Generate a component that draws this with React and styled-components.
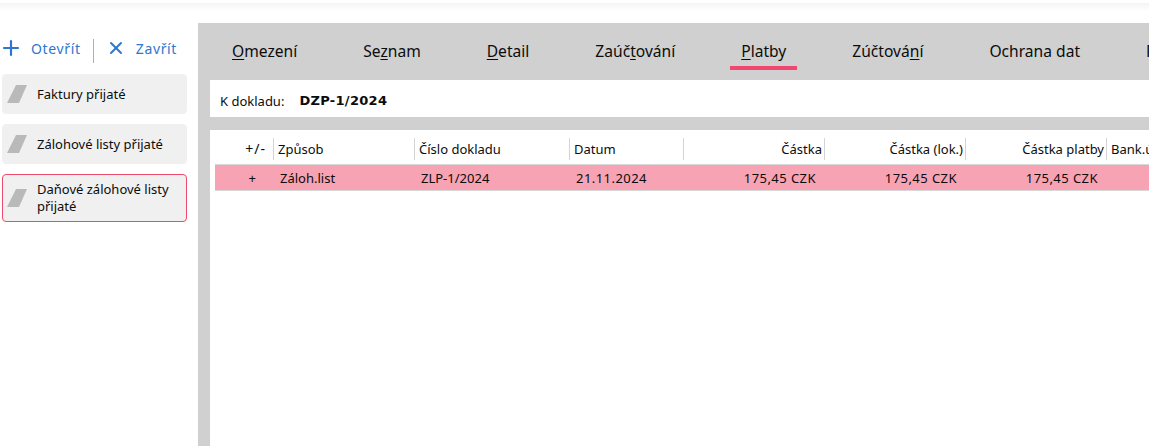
import styled, { createGlobalStyle } from "styled-components";
import { Plus, X } from "lucide-react";

const Global = createGlobalStyle`
  html, body {
    margin: 0;
    height: 100%;
    overflow: hidden;
    background: #fff;
  }
  body {
    font-family: "Noto Sans", "Open Sans", sans-serif;
    color: #0c0c0c;
  }
`;

const Page = styled.div`
  width: 1149px;
  height: 446px;
  overflow: hidden;
  display: flex;
  flex-direction: column;
`;

const TopStrip = styled.div`
  height: 8px;
  margin-top: 3px;
  background: linear-gradient(#f4f4f4, #ffffff);
`;

const Body = styled.div`
  flex: 1;
  display: flex;
  padding-top: 12px;
  min-height: 0;
`;

const Side = styled.aside`
  width: 198px;
  flex: none;
  padding: 0 11px 0 2px;
  box-sizing: border-box;
`;

const Toolbar = styled.div`
  height: 51px;
  display: flex;
  align-items: center;
  padding-top: 5px;
  box-sizing: border-box;
  color: #2f76cf;
  font-size: 14px;
  letter-spacing: 0.65px;
`;

const ToolButton = styled.span`
  display: flex;
  align-items: center;
  gap: ${(p) => p.$gap}px;
  padding-bottom: 6px;
  margin-left: ${(p) => p.$offset || 0}px;
`;

const Divider = styled.span`
  width: 1px;
  height: 24px;
  background: #b0b0b0;
  margin: 0 12px;
`;

const Cards = styled.div`
  display: flex;
  flex-direction: column;
  gap: 10px;
`;

const Card = styled.div`
  display: flex;
  align-items: center;
  gap: 10px;
  min-height: 40px;
  padding: 6px 4px;
  box-sizing: border-box;
  border-radius: 4px;
  background: #f0f0f0;
  border: 1px solid ${(p) => (p.$active ? "#ee4a6d" : "#f0f0f0")};
  font-size: 13px;
  line-height: 17px;
`;

const Mark = styled.span`
  width: 20px;
  height: 18px;
  flex: none;
  background: #b9b9b9;
  clip-path: polygon(45% 0, 100% 0, 60% 100%, 0 100%);
`;

const Panel = styled.main`
  flex: 1;
  min-width: 0;
  background: #d0d0d0;
  display: flex;
  flex-direction: column;
  padding-left: 12px;
`;

const Tabs = styled.nav`
  height: 57px;
  flex: none;
  display: flex;
  gap: 44px;
  padding-left: 11px;
  white-space: nowrap;
`;

const Tab = styled.span`
  height: 30px;
  padding: 13px 11px 0;
  display: flex;
  align-items: center;
  font-size: 15.6px;
  border-bottom: 4px solid ${(p) => (p.$active ? "#f0466f" : "transparent")};

  u {
    text-underline-offset: 2px;
    text-decoration-thickness: 1px;
  }
`;

const DocBar = styled.div`
  height: 37px;
  flex: none;
  box-sizing: border-box;
  padding: 4px 0 0 10px;
  background: #fff;
  display: flex;
  align-items: center;
  font-size: 13px;
`;

const DocValue = styled.b`
  margin-left: 15px;
  font-family: "DejaVu Sans", sans-serif;
  font-size: 13px;
  letter-spacing: 0.3px;
`;

const TableWrap = styled.div`
  flex: 1;
  margin-top: 13px;
  background: #fff;
  padding: 8px 0 0 5px;
  min-height: 0;
`;

const Row = styled.div`
  display: grid;
  grid-template-columns: 59px 141px 155px 114px 141px 141px 141px 100px;
  height: ${(p) => p.$h}px;
  align-items: ${(p) => (p.$bg ? "center" : "start")};
  font-size: 13px;
  white-space: nowrap;
  background: ${(p) => p.$bg || "transparent"};
  border-top: ${(p) => (p.$bg ? "1px solid #d8d8d8" : "none")};
  border-bottom: ${(p) => (p.$bg ? "1px solid #d8d8d8" : "none")};
  box-sizing: border-box;
`;

const Head = styled.span`
  height: 22px;
  line-height: 22px;
  padding: 0 ${(p) => (p.$right ? "2px" : "4px")} 0 4px;
  text-align: ${(p) => (p.$right ? "right" : "left")};
  border-right: ${(p) => (p.$end ? "none" : "1px solid #d4d4d4")};
  box-sizing: border-box;
  overflow: hidden;
`;

const SignHead = styled(Head)`
  text-align: right;
  padding-right: 7px;
  font-size: 14px;
  letter-spacing: 1px;
`;

const Cell = styled.span`
  padding: 0 ${(p) => (p.$right ? "9px" : "5px")} 0 6px;
  text-align: ${(p) => (p.$right ? "right" : "left")};
  letter-spacing: ${(p) => (p.$wide ? "0.45px" : "0")};
`;

const SignCell = styled.span`
  text-align: right;
  padding-right: 18px;
`;

const headers = [
  ["Způsob"],
  ["Číslo dokladu"],
  ["Datum"],
  ["Částka", true],
  ["Částka (lok.)", true],
  ["Částka platby", true],
  ["Bank.účet"],
];

export default function App() {
  return (
    <Page>
      <Global />
      <TopStrip />
      <Body>
        <Side>
          <Toolbar>
            <ToolButton $gap={8} $offset={-3}>
              <Plus size={24} strokeWidth={2.2} />
              Otevřít
            </ToolButton>
            <Divider />
            <ToolButton $gap={10}>
              <X size={20} strokeWidth={2.4} />
              Zavřít
            </ToolButton>
          </Toolbar>
          <Cards>
            <Card><Mark />Faktury přijaté</Card>
            <Card><Mark />Zálohové listy přijaté</Card>
            <Card $active><Mark /><span>Daňové zálohové listy přijaté</span></Card>
          </Cards>
        </Side>
        <Panel>
          <Tabs>
            <Tab><span><u>O</u>mezení</span></Tab>
            <Tab><span>Se<u>z</u>nam</span></Tab>
            <Tab><span><u>D</u>etail</span></Tab>
            <Tab><span>Zaúč<u>t</u>ování</span></Tab>
            <Tab $active><span><u>P</u>latby</span></Tab>
            <Tab><span>Zúčtová<u>n</u>í</span></Tab>
            <Tab><span>Ochrana dat</span></Tab>
            <Tab><span>Poznámky</span></Tab>
          </Tabs>
          <DocBar>K dokladu:<DocValue>DZP-1/2024</DocValue></DocBar>
          <TableWrap>
            <Row $h={26}>
              <SignHead>+/-</SignHead>
              {headers.map(([label, right], i) => (
                <Head key={label} $right={right} $end={i === headers.length - 1}>
                  {label}
                </Head>
              ))}
            </Row>
            <Row $h={27} $bg="#f7a3b3">
              <SignCell>+</SignCell>
              <Cell>Záloh.list</Cell>
              <Cell>ZLP-1/2024</Cell>
              <Cell $wide>21.11.2024</Cell>
              <Cell $right $wide>175,45 CZK</Cell>
              <Cell $right $wide>175,45 CZK</Cell>
              <Cell $right $wide>175,45 CZK</Cell>
              <Cell />
            </Row>
          </TableWrap>
        </Panel>
      </Body>
    </Page>
  );
}
